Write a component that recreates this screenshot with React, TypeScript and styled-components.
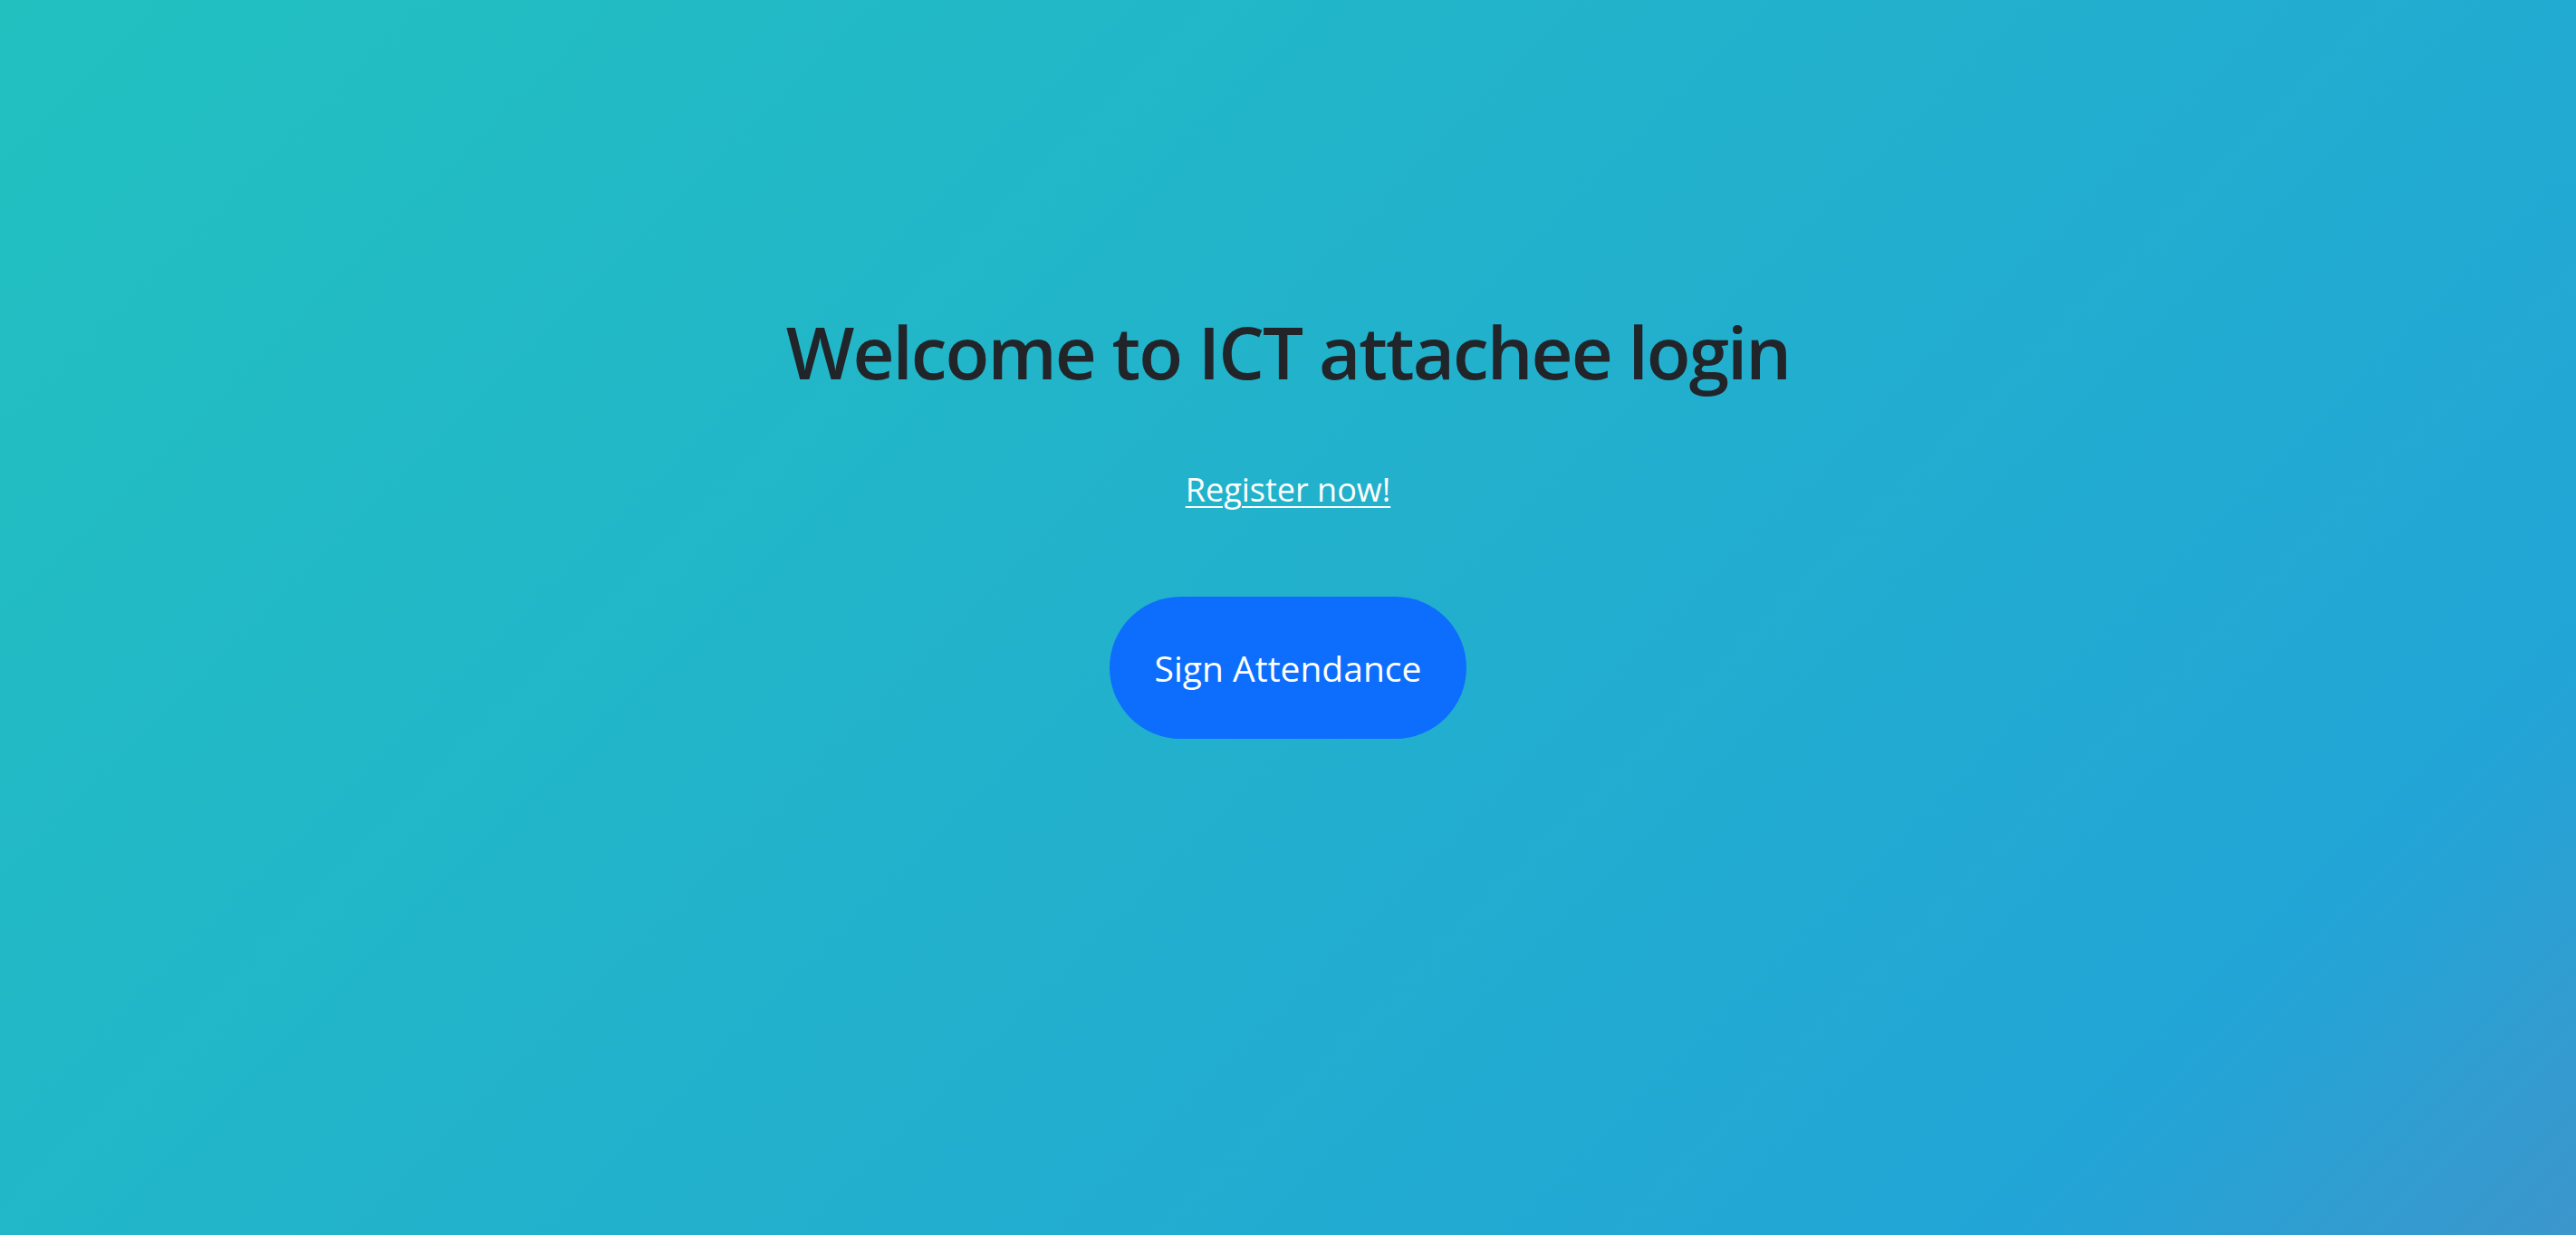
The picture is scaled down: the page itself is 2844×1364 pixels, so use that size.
import React from "react";
import styled, { createGlobalStyle } from "styled-components";

const GlobalStyle = createGlobalStyle`
  html, body {
    margin: 0;
    padding: 0;
    height: 100%;
  }
  body {
    font-family: "Open Sans", "Noto Sans", "Liberation Sans", sans-serif;
    color: #212529;
  }
  #root {
    min-height: 100vh;
  }
`;

const Page = styled.main`
  min-height: 100vh;
  box-sizing: border-box;
  background: linear-gradient(135deg, #22c1c0 0%, #22a5d6 85%, #3c96cc 100%);
  display: flex;
  flex-direction: column;
  align-items: center;
  padding-top: 340px;
`;

const Title = styled.h1`
  margin: 0;
  font-size: 80px;
  line-height: 96px;
  font-weight: 600;
  color: #212529;
  letter-spacing: -2px;
`;

const RegisterLink = styled.a`
  margin-top: 80px;
  font-size: 36px;
  line-height: 50px;
  color: #ffffff;
  text-decoration: underline;
  text-underline-offset: 5px;
  text-decoration-thickness: 2px;
`;

const SignButton = styled.button`
  margin-top: 93px;
  width: 394px;
  height: 157px;
  border: none;
  border-radius: 80px;
  background: #0d6efd;
  color: #ffffff;
  font-family: inherit;
  font-size: 39px;
  line-height: 60px;
  cursor: pointer;
`;

export default function App() {
  return (
    <>
      <GlobalStyle />
      <Page>
        <Title>Welcome to ICT attachee login</Title>
        <RegisterLink href="#">Register now!</RegisterLink>
        <SignButton type="button">Sign Attendance</SignButton>
      </Page>
    </>
  );
}
